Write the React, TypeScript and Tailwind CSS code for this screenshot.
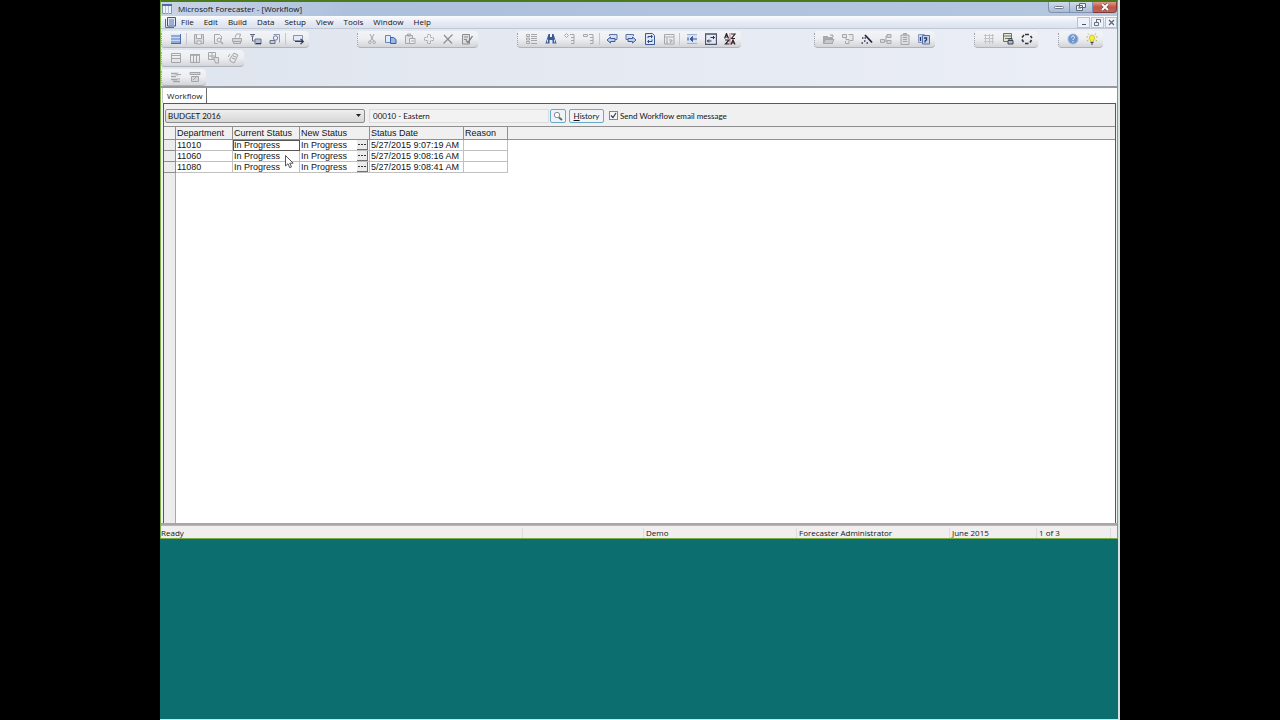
import type { ReactNode } from "react";

const GREY = "#a4a6aa";
const NAVY = "#3c5a94";
const DARK = "#2c3350";

function Icon({ children }: { children: ReactNode }) {
  return (
    <svg viewBox="0 0 12 12" className="h-3 w-3" fill="none" strokeWidth="1" aria-hidden="true">
      {children}
    </svg>
  );
}

const icons: Record<string, ReactNode> = {
  sheet: (<><rect x="1" y="1" width="10" height="10" fill="#8fabdc" /><path d="M1 1.500h9" stroke="#dfe8f7" /><path d="M1 4.500h9M1 7.500h9" stroke="#c9d8f0" /><path d="M1 10.500h10M10.500 1v10" stroke="#4c6cab" /></>),
  save: (<><path d="M1.500 1.500h9v9h-9z" stroke={GREY} fill="#d9dadd" /><path d="M3.500 1.500v4h5v-4M4 8h4v3H4z" stroke={GREY} fill="#f2f2f2" /></>),
  preview: (<><path d="M2.500 1.500h5l2 2v3M2.500 1.500v9h3" stroke={GREY} /><circle cx="7" cy="7" r="2" stroke={GREY} /><path d="M8.500 8.500l2.500 2.500" stroke={GREY} strokeWidth="1.500" /></>),
  print: (<><path d="M4 4.500l1.500-3.500h4L8.500 4.500" stroke={GREY} /><path d="M1.500 5.500h9v3h-9zM2.500 8.500v2h7v-2" stroke={GREY} fill="#d5d6d9" /></>),
  exportDown: (<><path d="M0 1.500h5M1 3h3M2.500 3v5h3" stroke="#626a80" /><path d="M5 6h6v5H5z" fill="#b6c1d4" stroke="#6e7994" /><path d="M6 10.500h5" stroke={DARK} /></>),
  mailPage: (<><path d="M4.500 1.500h6v8" stroke="#8995b0" fill="#e9eef8" /><circle cx="6.500" cy="5" r="2.200" stroke="#6d7fa7" /><path d="M1 7.500h5v3H1z" stroke="#68718a" fill="#c7cfdf" /></>),
  send: (<><path d="M1.500 2.500h9v5h-9z" stroke="#8793ad" fill="#e5ebf5" /><path d="M3 8.500h8M8.500 6l3 2.500-3 2.500" stroke="#333c55" strokeWidth="1.200" /></>),
  rows: (<><path d="M1.500 1.500h9v9h-9z" stroke={GREY} /><path d="M1 3.500h10M2 6.500h8" stroke={GREY} /></>),
  cols: (<><path d="M1.500 2.500h9v8h-9zM4.500 3v7M7.500 3v7" stroke={GREY} /><path d="M1 3h10" stroke={GREY} strokeWidth="1.500" /></>),
  copyGrid: (<><path d="M.5.500h7v7h-7zM4 .5v7M.5 4h7" stroke={GREY} /><path d="M5.500 5.500h5v5.500h-3z" stroke={GREY} fill="#dedfe1" /></>),
  refreshPage: (<><path d="M3 6.500L7 1l4 2-4 8-4-2z" stroke={GREY} fill="#e6e7e9" /><path d="M1 5l2-3M5 6l3 1M6 4l3 1" stroke={GREY} /></>),
  treeUp: (<><path d="M1 2.500h6M1 5.500h5M1 8.500h6M3 10.500h7" stroke={GREY} strokeWidth="1.300" /><path d="M7 3.500h4M8 1.500l-2 2 2 2M7 8h3" stroke={GREY} /></>),
  treeDown: (<><path d="M1 1.500h10v2H1zM2.500 5.500h7v5h-7z" stroke={GREY} fill="#d5d6d9" /><path d="M4 9l4-4" stroke={GREY} /></>),
  cut: (<><path d="M4 1l3.500 7M8 1L4.500 8" stroke={GREY} /><circle cx="3.800" cy="9.300" r="1.300" stroke={GREY} /><circle cx="8.200" cy="9.300" r="1.300" stroke={GREY} /></>),
  copy: (<><path d="M.5 2.500h5v7h-5z" stroke="#6984bd" fill="#e2ebfa" /><path d="M5.500 4.500h3l2.500 2v4h-5.500z" stroke="#3c5fa8" fill="#9ab5e6" /></>),
  paste: (<><path d="M1.500 2.500h7v8h-7zM3.500 1h3v2h-3z" stroke={GREY} fill="#e3e4e6" /><path d="M5.500 5.500h5.500v5h-5.500zM7 8h3" stroke={GREY} fill="#f0f0f0" /></>),
  plus: <path d="M4.500 1.500h3v3h3v3h-3v3h-3v-3h-3v-3h3z" stroke={GREY} strokeDasharray="2 1" />,
  cross: <path d="M2 2l8 8.500M10.500 1.500L1.500 10.500" stroke="#8c8e92" strokeWidth="1.200" />,
  check: (<><path d="M1.500 1.500h7v9.500h-7zM3 4h4M3 6.500h3" stroke="#8c8e92" fill="#dcdde0" /><path d="M5 7.500l2 2L11.500 3" stroke="#7a7c80" strokeWidth="1.300" /></>),
  outline: (<><path d="M.5 1.500h3v2h-3zM.5 5h3v2h-3zM.5 8.500h3v2h-3z" stroke={GREY} /><path d="M5 1.500h6M5 3.500h6M5 5.500h6M5 7.500h6M5 10.500h6" stroke={GREY} /></>),
  find: (<><path d="M3.500 1h1.500v3h2V1h1.500L11.500 10.500H7.500V7h-3v3.500H.5z" fill={NAVY} /><path d="M2.500 6.500v3M9.500 6.500v3" stroke="#c9d6ee" /></>),
  expand: (<><path d="M2.500.500l2 2-2 2-2-2z" stroke={GREY} /><path d="M6 1.500h4v9M7 4.500h3M7 7.500h3M7 10.500h3" stroke={GREY} /></>),
  collapse: (<><path d="M.5 1.500h4v2h-4z" stroke={GREY} /><path d="M6 1.500h4v9M7 4.500h3M7 7.500h3M7 10.500h3" stroke={GREY} /></>),
  back: (<><path d="M3.500 3V1.500H11v5H9" stroke="#5d73a3" fill="#d5dff1" /><path d="M1 7l3.500-3v1.500H9v3H4.500V10z" stroke={NAVY} fill="#c3d2ee" /></>),
  forward: (<><path d="M3 6.500H1v-5h7.500V3" stroke="#5d73a3" fill="#d5dff1" /><path d="M11 7L7.500 4v1.500H3v3h4.500V10z" stroke={NAVY} fill="#c3d2ee" /></>),
  reload: (<><path d="M1.500.500h7l2 2v9h-9z" stroke={NAVY} fill="#dfe8f7" /><path d="M4 5V3.500h4M7 2l1.500 1.500L7 5M8 6.500V8.500H4M5 7L3.500 8.500 5 10" stroke="#344b80" /></>),
  gridHelp: (<><path d="M1.500 1.500h9.500v9.500H1.500zM1.500 4h9" stroke={GREY} /><path d="M4 5v6M6 7h3v1.500H7.500V10" stroke={GREY} /></>),
  fitLeft: (<><path d="M1 1h10v9.500H1z" fill="#d7e1f3" /><path d="M1 1.500h10M1 10.500h10" stroke="#9fb0d0" /><path d="M5 6h6M4 6l2.500-2.500v5z" stroke={NAVY} fill={NAVY} /><path d="M1 4.500h2v3H1z" fill="#7d97cc" /></>),
  swap: (<><path d="M.500 1h11v10.500H.5z" stroke="#4e5470" fill="#e4e8f2" strokeWidth="1.300" /><path d="M5.500 4.500h4M8 3L9.500 4.500 8 6M6.500 8H2M4 6.500L2.500 8 4 9.500" stroke={DARK} /></>),
  sort: (<><path d="M.500 5.500L2.500.5l2 5M1.500 4h2.500M7 1h4L7.500 5.500H11M1 7h4L1.500 11H5M7 11.500L9 7l2 4.500M7.500 10h3" stroke="#31242c" strokeWidth="1.200" /><path d="M6 0v12" stroke="#9b3b3b" strokeWidth=".6" /></>),
  folder: (<><path d="M.5 3.500h4l1 1h4v6h-9z" stroke={GREY} fill="#a8aaad" /><path d="M2.500 6.500h8.500l-2 4H.5zM7 2h3v2" stroke={GREY} fill="#c8c9cc" /></>),
  flow: (<><path d="M.5 1.500h4v3h-4zM6.500 1.500h4.500v6h-3M4 4v2.500h3v4H3.500V8" stroke={GREY} fill="#e5e6e8" /></>),
  wand: (<><path d="M4 2l7 7.500" stroke="#20263d" strokeWidth="1.800" /><path d="M1 5h1.500M3 8h1.500M.5 10H2M5.500 10H7M3.500 5H5" stroke="#343b55" strokeWidth="1.500" /></>),
  org: <path d="M.5 6.500h4v3h-4zM7 1.500h4v3H7zM7 7.500h4v3H7zM4.500 8h1.500V3h1M6 8.500h1" stroke={GREY} fill="#d6d7da" />,
  clipboard: (<><path d="M2 2h8v9.500H2zM4.500.500h3V2h-3z" stroke={GREY} fill="#ddd" /><path d="M4 4.500h4M4 6.500h4M4 8.500h4" stroke={GREY} /></>),
  pageHelp: (<><path d="M.5 1.500h6v8h-6z" stroke="#8a9cc4" fill="#c6d4ee" /><path d="M4.500 2.500h7v8.500h-7z" stroke="#5a71a8" fill="#c5d3ee" /><path d="M6 5h2.500v2L7 8v1.500M2.500 4v4" stroke="#243867" strokeWidth="1.300" /></>),
  dots: <path d="M1 2.500h10M1 5.500h10M1 8.500h10M2.500 1v10M6.500 1v10M9.500 1v10" stroke="#c2c4c8" />,
  lock: (<><path d="M1.500.500h8v8h-8zM1.500 3h8M3 5.500h5" stroke="#66745f" fill="#e3ead8" /><path d="M6 7.500h5V11H6zM7 7.500V5.500h3v2" stroke="#3e4654" fill="#b3b9c3" /></>),
  cycle: <path d="M4 1.500h4M9.500 3L11 5M10.500 7L9 9.500M7.500 10.500H4M2.500 9L1 6.500M1 4.500L3 2" stroke="#31353f" strokeWidth="1.600" />,
  help: (<><circle cx="6" cy="6" r="5" fill="#6f94cd" stroke="#9db9e2" /><path d="M4.500 4.500c0-2 3-2 3 0 0 1-1.500 1-1.500 2.500M6 8v1.200" stroke="#fff" /></>),
  tip: (<><path d="M6 2a2.800 2.800 0 0 1 1.500 5V8.500h-3V7A2.800 2.800 0 0 1 6 2z" fill="#f7ee3c" stroke="#cfc434" /><path d="M4.500 9.500h3M5 11h2" stroke="#3c4450" /><path d="M.5 4h1.500M10 4h1.500M2 .5l1.200 1.200M10 .5L8.800 1.700M1 8l1.500-1M11 8L9.500 7" stroke="#b8ad40" /></>),
};

type ToolItem = [icon: string, label: string] | null;

function ToolGroup({ label, items, className = "" }: { label: string; items: ToolItem[]; className?: string }) {
  return (
    <div
      role="toolbar"
      aria-label={label}
      className={`flex h-[17px] shrink-0 items-center rounded-sm border-b border-[#aeb2ba] bg-linear-to-b from-[#f3f4f8] via-[#eceef1] to-[#d3d5d9] pr-0.5 ${className}`}
    >
      <span className="mr-[3px] h-3 w-0.5 border-l border-dotted border-[#9ea3ad]" />
      {items.map((item, i) =>
        item ? (
          <button key={i} type="button" aria-label={item[1]} className="flex h-4 w-[19px] items-center justify-center">
            <Icon>{icons[item[0]]}</Icon>
          </button>
        ) : (
          <span key={i} className="mr-[2px] ml-px h-3 w-px bg-[#c3c6cc]" />
        ),
      )}
    </div>
  );
}

const menus = ["File", "Edit", "Build", "Data", "Setup", "View", "Tools", "Window", "Help"];

const rows = [
  { dept: "11010", current: "In Progress", next: "In Progress", date: "5/27/2015 9:07:19 AM" },
  { dept: "11060", current: "In Progress", next: "In Progress", date: "5/27/2015 9:08:16 AM" },
  { dept: "11080", current: "In Progress", next: "In Progress", date: "5/27/2015 9:08:41 AM" },
];

function TitleBar() {
  return (
    <header className="flex h-[14px] shrink-0 items-center bg-linear-to-r from-[#c9d5e6] via-[#adc0dc] via-20% to-[#b5c6df] pl-px">
      <svg viewBox="0 0 10 10" className="h-2.5 w-2.5" fill="none" aria-hidden="true">
        <path d="M.5.500h9v9h-9z" fill="#edf2fa" stroke="#8594b3" />
        <path d="M0 1h10" stroke="#4d6aa7" strokeWidth="2" />
        <path d="M3.500 2v8M6.500 2v8" stroke="#b3bed2" />
      </svg>
      <h1 className="ml-1.5 text-[8px] leading-3">Microsoft Forecaster - [Workflow]</h1>
      <div className="ml-auto flex h-[11px] self-start">
        <button type="button" aria-label="Minimize" className="flex w-[22px] items-center justify-center rounded-bl-sm border border-t-0 border-[#8192ae] bg-linear-to-b from-[#d0dbeb] to-[#a9bbd6]">
          <span className="h-[3px] w-2.5 rounded-sm border border-[#6f7889] bg-white" />
        </button>
        <button type="button" aria-label="Restore" className="flex w-[23px] items-center justify-center border border-t-0 border-l-0 border-[#8192ae] bg-linear-to-b from-[#d0dbeb] to-[#a9bbd6]">
          <svg viewBox="0 0 10 8" className="h-2 w-2.5" fill="#f4f4f4" stroke="#5e6779" aria-hidden="true"><path d="M3.500.5h6v4h-6zM.5 2.500h6v5h-6z" /><path d="M2 5h3" /></svg>
        </button>
        <button type="button" aria-label="Close" className="flex w-[24px] items-center justify-center rounded-br-sm border border-t-0 border-l-0 border-[#7c3a38] bg-linear-to-b from-[#dd9c8e] via-[#c25646] to-[#bb6454]">
          <svg viewBox="0 0 10 8" className="h-2 w-2.5" aria-hidden="true"><path d="M2 1l6 6M8 1L2 7" stroke="#694448" strokeWidth="3" /><path d="M2 1l6 6M8 1L2 7" stroke="#fff" strokeWidth="1.800" /></svg>
        </button>
      </div>
    </header>
  );
}

function MenuBar() {
  return (
    <nav aria-label="Main menu" className="flex h-[13px] shrink-0 items-center border-b border-[#c0c8d6] bg-linear-to-b from-[#fbfcfe] via-[#e6ebf5] to-[#dbe2ef] pl-1">
      <svg viewBox="0 0 11 11" className="h-[11px] w-[11px]" fill="none" aria-hidden="true">
        <path d="M2.500.5h8v8.500h-8z" fill="#dfe8f8" stroke="#3e568c" />
        <path d="M.5 2v8.500H9M4 3h5M4 5h5M4 7h5" stroke="#5570ab" />
      </svg>
      <div className="ml-[5px] flex gap-2.5">
        {menus.map((m) => (
          <button key={m} type="button" className="text-[8px] leading-3">{m}</button>
        ))}
      </div>
      <div className="ml-auto flex h-[11px] gap-px">
        <button type="button" aria-label="Minimize document" className="flex w-[13px] items-end justify-center border border-[#b4c3d9] bg-[#eef3fa] pb-0.5"><span className="h-px w-1 bg-[#4b5567]" /></button>
        <button type="button" aria-label="Restore document" className="flex w-[13px] items-center justify-center border border-[#b4c3d9] bg-[#eef3fa]">
          <svg viewBox="0 0 7 7" className="h-[7px] w-[7px]" fill="none" stroke="#667083" aria-hidden="true"><path d="M2.500.5h4v3M.5 3.500h4v3h-4zM2.500 0v3" /></svg>
        </button>
        <button type="button" aria-label="Close document" className="flex w-[12px] items-center justify-center border border-[#b4c3d9] bg-[#eef3fa]">
          <svg viewBox="0 0 7 7" className="h-[7px] w-[7px]" stroke="#5b6476" strokeWidth="1.200" aria-hidden="true"><path d="M1 1l5 5M6 1L1 6" /></svg>
        </button>
      </div>
    </nav>
  );
}

function Toolbars() {
  return (
    <div className="flex h-[59px] shrink-0 flex-col gap-0.5 border-b-2 border-[#9599a1] bg-linear-to-r from-[#dfe5ee] to-[#ebeef7] pt-0.5">
      <div className="flex">
        <ToolGroup label="Standard" items={[["sheet", "Open sheet"], null, ["save", "Save"], ["preview", "Print preview"], ["print", "Print"], ["exportDown", "Export"], ["mailPage", "Publish"], null, ["send", "Send"]]} />
        <ToolGroup className="ml-12" label="Edit" items={[["cut", "Cut"], ["copy", "Copy"], ["paste", "Paste"], ["plus", "Insert"], ["cross", "Delete"], ["check", "Validate"]]} />
        <ToolGroup className="ml-[39px]" label="View" items={[["outline", "Outline"], ["find", "Find"], ["expand", "Expand"], ["collapse", "Collapse"], null, ["back", "Previous"], ["forward", "Next"], ["reload", "Refresh"], ["gridHelp", "Details"], null, ["fitLeft", "Fit"], ["swap", "Swap"], ["sort", "Sort"]]} />
        <ToolGroup className="ml-[73px]" label="Data" items={[["folder", "Open"], ["flow", "Distribute"], ["wand", "Calculate"], ["org", "Hierarchy"], ["clipboard", "Clipboard"], ["pageHelp", "Information"]]} />
        <ToolGroup className="ml-[39px]" label="Workflow" items={[["dots", "Grid"], ["lock", "Lock"], ["cycle", "Cycle"]]} />
        <ToolGroup className="ml-5" label="Help" items={[["help", "Help"], ["tip", "Tip"]]} />
      </div>
      <div className="flex">
        <ToolGroup label="Layout" items={[["rows", "Rows"], ["cols", "Columns"], ["copyGrid", "Copy layout"], ["refreshPage", "Reset layout"]]} />
      </div>
      <div className="flex">
        <ToolGroup label="Tree" items={[["treeUp", "Roll up"], ["treeDown", "Roll down"]]} />
      </div>
    </div>
  );
}

function FilterBar() {
  return (
    <div className="flex h-[23px] shrink-0 items-center border-t border-[#55585c] bg-[#f0f0f0] pt-px pl-px font-[Lato,'Open_Sans',sans-serif]">
      <div className="relative flex w-[200px] items-center">
        <select aria-label="Budget" className="h-[14px] w-full appearance-none rounded-xs border border-[#8b8d90] bg-linear-to-b from-[#efefef] to-[#d6d6d6] pl-0.5 text-[8px] leading-3">
          <option>BUDGET 2016</option>
        </select>
        <svg viewBox="0 0 5 3" className="pointer-events-none absolute right-1 h-[3px] w-[5px]" aria-hidden="true"><path d="M0 0h5L2.500 3z" fill="#222" /></svg>
      </div>
      <input aria-label="Entity" readOnly value="00010 - Eastern" className="ml-1 h-[14px] w-[180px] border border-[#dcdcdc] bg-[#f2f2f2] pl-[3px] text-[8px] leading-3" />
      <button type="button" aria-label="Look up" className="ml-px flex h-[14px] w-4 items-center justify-center rounded-xs border border-[#68a9cc] bg-[#edf3f7]">
        <svg viewBox="0 0 10 10" className="h-2.5 w-2.5" fill="#fff" aria-hidden="true"><circle cx="4" cy="4" r="2.700" stroke="#858b95" /><path d="M6 6.500l3 2.500" stroke="#5f636b" strokeWidth="1.800" /></svg>
      </button>
      <button type="button" className="ml-[3px] h-[14px] w-[35px] rounded-xs border border-[#68a9cc] bg-[#f0f4f6] text-[8px] leading-3"><u>H</u>istory</button>
      <label className="ml-[5px] flex items-center gap-0.5 text-[8px] leading-3 whitespace-nowrap">
        <span className="relative flex">
          <input type="checkbox" defaultChecked className="peer h-[9px] w-[9px] appearance-none border border-[#85878a] bg-[#f6f6f6]" />
          <svg viewBox="0 0 9 9" className="pointer-events-none absolute inset-0 hidden h-[9px] w-[9px] peer-checked:block" fill="none" aria-hidden="true"><path d="M2 4.500l2 2L7 2" stroke="#333b50" strokeWidth="1.200" /></svg>
        </span>
        Send Workflow email message
      </label>
    </div>
  );
}

function StatusGrid() {
  const head = "border-r border-b border-[#8f8f8f] bg-[#f0f0f0] px-px text-left font-normal";
  const cell = "border-r border-b border-[#c0c0c0] px-px";
  return (
    <div className="relative flex min-h-0 flex-1 flex-col border-t border-[#8f8f8f] bg-white font-['Liberation_Sans',Arial,sans-serif] text-[9px] leading-[10px]">
      <table className="w-full table-fixed border-separate border-spacing-0 whitespace-nowrap">
        <colgroup>
          <col className="w-3" />
          <col className="w-[57px]" />
          <col className="w-[67px]" />
          <col className="w-[70px]" />
          <col className="w-[94px]" />
          <col className="w-[44px]" />
          <col />
        </colgroup>
        <thead>
          <tr className="h-[13px]">
            <th className={head} aria-label="Row" />
            <th className={head}>Department</th>
            <th className={head}>Current Status</th>
            <th className={head}>New Status</th>
            <th className={head}>Status Date</th>
            <th className={head}>Reason</th>
            <td className="border-b border-[#8f8f8f] bg-[#f0f0f0]" />
          </tr>
        </thead>
        <tbody>
          {rows.map((r, i) => (
            <tr key={r.dept} className="h-[11px]">
              <td className="border-r border-b border-[#8f8f8f] bg-[#ececec]" />
              <td className={cell}>{r.dept}</td>
              <td className={i === 0 ? `${cell} outline -outline-offset-1 outline-[#555555]` : cell}>{r.current}</td>
              <td className={cell}>
                <div className="flex items-center justify-between">
                  {r.next}
                  <button type="button" aria-label={`Choose new status for ${r.dept}`} className="flex h-[10px] w-[11px] items-center justify-center gap-px border-r border-b border-[#707070] bg-[#ececec]">
                    <span className="h-px w-0.5 bg-[#333333]" />
                    <span className="h-px w-0.5 bg-[#333333]" />
                    <span className="h-px w-0.5 bg-[#333333]" />
                  </button>
                </div>
              </td>
              <td className={cell}>{r.date}</td>
              <td className={cell} />
              <td />
            </tr>
          ))}
        </tbody>
      </table>
      <div className="w-3 flex-1 border-r border-[#a8a8a8] bg-[#ececec]" />
      <svg viewBox="0 0 9 14" className="absolute top-7 left-[121px] h-[14px] w-[9px]" aria-hidden="true">
        <path d="M.5.500v10.500l2.500-2.300 1.700 4 1.800-.8-1.700-3.700h3.400z" fill="#fff" stroke="#444" strokeWidth=".9" />
      </svg>
    </div>
  );
}

function StatusBar() {
  return (
    <footer className="flex h-[13px] shrink-0 items-center border-t border-[#b8b5b5] bg-[#f0eeee] pt-px text-[8px] leading-[10px] whitespace-nowrap">
      <span className="min-w-0 flex-1">Ready</span>
      <span className="h-[10px] w-[121px] border-l border-[#dedcdc]" />
      <span className="w-[153px] border-l border-[#dedcdc] pl-0.5">Demo</span>
      <span className="w-[153px] border-l border-[#dedcdc] pl-0.5">Forecaster Administrator</span>
      <span className="w-[87px] border-l border-[#dedcdc] pl-0.5">June 2015</span>
      <span className="w-[74px] border-l border-[#dedcdc] pl-0.5">1 of 3</span>
      <span className="h-[10px] w-[7px] border-l border-[#dedcdc]" />
    </footer>
  );
}

export default function App() {
  return (
    <div className="flex min-h-screen justify-center bg-black font-['Open_Sans','Noto_Sans',sans-serif] text-[#141414]">
      <div className="flex w-3/4 flex-col border-r-2 border-b border-[#d5e2e2] bg-[#0d6e70]">
        <div className="flex h-[calc(75vh-1px)] flex-col border border-t-2 border-[#7aab45] border-t-[#4a7a1c] bg-[#f0f0f0]">
          <TitleBar />
          <MenuBar />
          <Toolbars />
          <div className="flex h-[15px] shrink-0 bg-white" role="tablist">
            <button type="button" role="tab" aria-selected="true" className="ml-px h-[15px] border-r border-l border-[#6d6f73] border-l-[#c8c8c8] bg-white px-1 text-[8px] leading-3">Workflow</button>
          </div>
          <main className="mr-px ml-0.5 flex min-h-0 flex-1 flex-col border-r border-l border-[#55585c]">
            <FilterBar />
            <StatusGrid />
          </main>
          <div className="h-0.5 shrink-0 border-t-2 border-[#aaa6a8]" />
          <StatusBar />
        </div>
      </div>
    </div>
  );
}
